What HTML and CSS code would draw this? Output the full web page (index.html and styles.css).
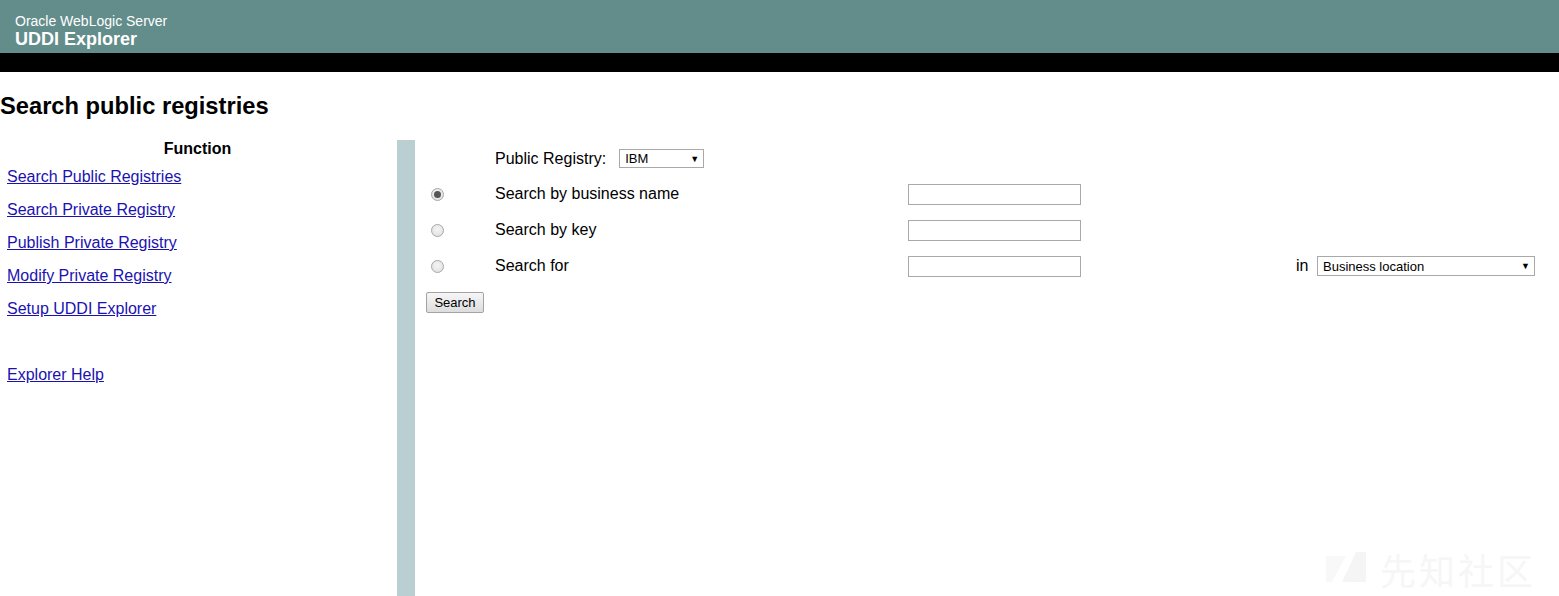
FILE: index.html
```html
<!DOCTYPE html>
<html>
<head>
<meta charset="utf-8">
<title>UDDI Explorer</title>
<link rel="stylesheet" href="styles.css">
</head>
<body>
<div class="header">
  <div class="product">Oracle WebLogic Server</div>
  <div class="app">UDDI Explorer</div>
</div>
<div class="blackbar"></div>
<h2 class="title">Search public registries</h2>
<div class="main">
  <div class="sidebar">
    <div class="func">Function</div>
    <a href="#">Search Public Registries</a>
    <a href="#">Search Private Registry</a>
    <a href="#">Publish Private Registry</a>
    <a href="#">Modify Private Registry</a>
    <a href="#">Setup UDDI Explorer</a>
    <div class="spacer"></div>
    <a href="#">Explorer Help</a>
  </div>
  <div class="divider"></div>
  <div class="content">
    <div class="form">
      <div class="cell"></div>
      <div class="cell label">Public Registry:<span class="sel sel-ibm">IBM<span class="arrow">▼</span></span></div>
      <div class="cell"></div>
      <div class="cell"></div>
      <div class="cell"></div>

      <div class="cell"><span class="radio checked"></span></div>
      <div class="cell label">Search by business name</div>
      <div class="cell"><span class="input"></span></div>
      <div class="cell"></div>
      <div class="cell"></div>

      <div class="cell"><span class="radio"></span></div>
      <div class="cell label">Search by key</div>
      <div class="cell"><span class="input"></span></div>
      <div class="cell"></div>
      <div class="cell"></div>

      <div class="cell"><span class="radio"></span></div>
      <div class="cell label">Search for</div>
      <div class="cell"><span class="input"></span></div>
      <div class="cell label">in</div>
      <div class="cell"><span class="sel sel-loc">Business location<span class="arrow">▼</span></span></div>
    </div>
    <button class="btn">Search</button>
  </div>
</div>
<div class="watermark">
  <svg width="44" height="34" viewBox="0 0 44 34"><polygon points="0,4 20,4 6,30 0,30" fill="#f8f8f8"/><polygon points="30,0 40,0 40,30 16,30" fill="#f5f5f5"/></svg>
  <span>先知社区</span>
</div>
</body>
</html>
```
FILE: styles.css
```css
html, body {
  margin: 0;
  padding: 0;
  background: #ffffff;
  font-family: "Liberation Sans", Arial, sans-serif;
  color: #000;
}
.header {
  background: #628d8b;
  color: #fff;
  padding: 13px 15px 4px;
  height: 36px;
}
.product {
  font-size: 14px;
  line-height: 16px;
}
.app {
  font-size: 18px;
  font-weight: bold;
  line-height: 20px;
}
.blackbar {
  height: 19px;
  background: #000;
}
.title {
  font-size: 23.7px;
  font-weight: bold;
  margin: 20px 0 20px;
  line-height: 28px;
}
.main {
  display: flex;
  min-height: 456px;
}
.sidebar {
  width: 397px;
  display: flex;
  flex-direction: column;
  align-items: flex-start;
  gap: 15px;
  font-size: 16px;
  line-height: 18px;
}
.func {
  align-self: stretch;
  text-align: center;
  font-weight: bold;
  margin-bottom: -5px;
  padding-right: 2px;
}
.sidebar a {
  color: #1a12b0;
  text-decoration: underline;
  margin-left: 7px;
}
.spacer {
  height: 18px;
}
.divider {
  width: 18px;
  background: #b9cfd1;
}
.content {
  padding: 1px 0 0 11px;
}
.form {
  display: grid;
  grid-template-columns: 69px 413px 388px 21px 218px;
  grid-template-rows: 36px 35px 36px 36px;
  font-size: 16px;
}
.cell {
  display: flex;
  align-items: center;
}
.label {
  padding-bottom: 1px;
}
.radio {
  display: inline-block;
  box-sizing: border-box;
  width: 13px;
  height: 13px;
  border-radius: 50%;
  border: 1px solid #a6a6a6;
  background: radial-gradient(circle at 50% 40%, #f4f4f4, #dedede);
  margin-left: 5px;
  position: relative;
}
.radio.checked::after {
  content: "";
  position: absolute;
  left: 2px;
  top: 2px;
  width: 7px;
  height: 7px;
  border-radius: 50%;
  background: #555;
}
.input {
  display: inline-block;
  box-sizing: border-box;
  width: 173px;
  height: 21px;
  border: 1px solid #a9a9a9;
  background: #fff;
}
.sel {
  display: inline-flex;
  align-items: center;
  box-sizing: border-box;
  border: 1px solid #a9a9a9;
  background: #fff;
  font-size: 13px;
  color: #000;
  padding-left: 5px;
  position: relative;
}
.sel-ibm {
  width: 85px;
  height: 19px;
  margin-left: 13px;
}
.sel-loc {
  width: 218px;
  height: 20px;
}
.arrow {
  position: absolute;
  right: 4px;
  top: 50%;
  transform: translateY(-50%);
  font-size: 9px;
}
.btn {
  margin-top: 8px;
  width: 58px;
  height: 21px;
  padding: 0;
  font-family: "Liberation Sans", Arial, sans-serif;
  font-size: 13px;
  color: #000;
  background: linear-gradient(#f6f6f6, #dddddd);
  border: 1px solid #a3a3a3;
  border-radius: 2px;
}
.watermark {
  position: absolute;
  left: 1326px;
  top: 543px;
  display: flex;
  align-items: center;
  gap: 10px;
}
.watermark span {
  font-family: "Noto Sans CJK SC", sans-serif;
  font-size: 36px;
  color: #f6f6f6;
  letter-spacing: 3px;
}
```
